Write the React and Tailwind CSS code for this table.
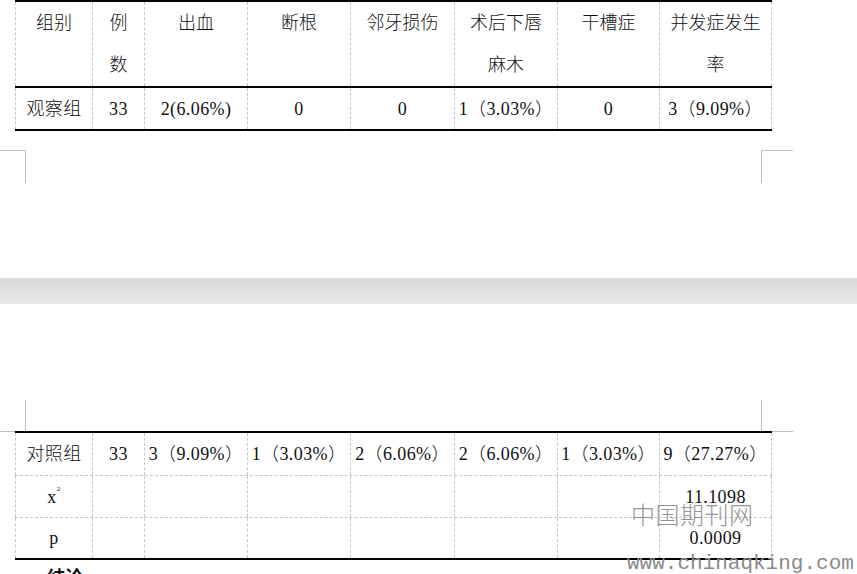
import React from 'react';

const W = ['w-[78px]', 'w-[52px]', 'w-[103px]', 'w-[103px]', 'w-[104px]', 'w-[103px]', 'w-[102px]', 'w-[112px]'];

const font = { fontFamily: '"Liberation Serif", "Noto Sans CJK SC", serif' };

function Cell({ i, children, head }) {
    return (
        <div
            className={`${W[i]} shrink-0 h-full border-r border-dashed border-[#c6c6c6] ${i === 0 ? 'border-l' : ''} ${
                head ? 'text-center leading-[42px] pt-0' : 'flex items-center justify-center leading-none tracking-[0.4px]'
            }`}
        >
            {children}
        </div>
    );
}

function Row({ cells, className, head }) {
    return (
        <div className={`flex ${className}`}>
            {cells.map((c, i) => (
                <Cell key={i} i={i} head={head}>{c}</Cell>
            ))}
        </div>
    );
}

const header = [
    '组别',
    <>例<br />数</>,
    '出血',
    '断根',
    '邻牙损伤',
    <>术后下唇<br />麻木</>,
    '干槽症',
    <>并发症发生<br />率</>,
];

const blank = ['', '', '', '', '', '', ''];

export default function App() {
    return (
        <div className="w-[857px] h-[574px] overflow-hidden bg-white text-[18px] text-[#111] font-light relative" style={font}>
            {/* page 1 */}
            <div className="h-[278px]">
                <div className="ml-[15px] w-[757px] border-t-2 border-b-2 border-black">
                    <Row head cells={header} className="h-[86px] border-b-2 border-black" />
                    <Row
                        cells={['观察组', '33', '2(6.06%)', '0', '0', '1（3.03%）', '0', '3（9.09%）']}
                        className="h-[41px]"
                    />
                </div>
                <div className="flex mt-[19px]">
                    <div className="w-[26px] h-[33px] border-t border-r border-[#bfbfbf]" />
                    <div className="ml-[735px] w-[32px] h-[33px] border-t border-l border-[#bfbfbf]" />
                </div>
            </div>

            <div className="h-[26px] bg-gradient-to-b from-[#dadadb] to-[#e8e8ea]" />

            {/* page 2 */}
            <div>
                <div className="flex mt-[96px]">
                    <div className="w-[26px] h-[32px] border-b border-r border-[#bfbfbf]" />
                    <div className="ml-[735px] w-[32px] h-[32px] border-b border-l border-[#bfbfbf]" />
                </div>
                <div className="-mt-[1px] ml-[15px] w-[757px] border-t-2 border-b-2 border-black relative">
                    <Row
                        cells={['对照组', '33', '3（9.09%）', '1（3.03%）', '2（6.06%）', '2（6.06%）', '1（3.03%）', '9（27.27%）']}
                        className="h-[43px] border-b border-dashed border-[#c6c6c6]"
                    />
                    <Row
                        cells={[<span>x<sup className="text-[7px] align-[8px]">2</sup></span>, ...blank.slice(0, 6), '11.1098']}
                        className="h-[42px] border-b border-dashed border-[#c6c6c6]"
                    />
                    <Row cells={['p', ...blank.slice(0, 6), '0.0009']} className="h-[40px]" />
                </div>
                <p className="ml-[47px] mt-[9px] font-bold leading-[18px]">结论</p>
            </div>

            {/* watermark */}
            <div className="absolute left-[631px] top-[504px] text-[24px] leading-[24px] tracking-[0.5px] text-[#8a8a8a] opacity-90">
                中国期刊网
            </div>
            <div
                className="absolute left-[627px] top-[552px] text-[21px] leading-[24px] text-[#8a8a8a] whitespace-nowrap"
                style={{ fontFamily: '"Liberation Mono", monospace' }}
            >
                www.chinaqking.com
            </div>
        </div>
    );
}
